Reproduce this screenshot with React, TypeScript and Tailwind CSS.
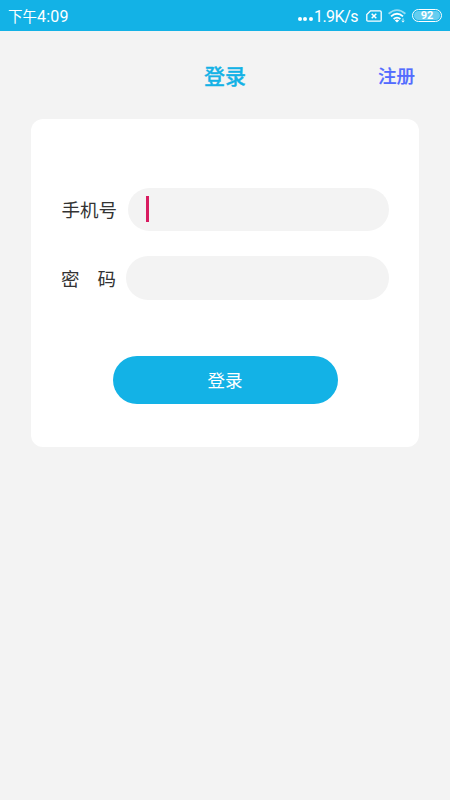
import { useState } from 'react';

const fontClass = "font-['Roboto','Noto_Sans_CJK_SC',sans-serif]";

function StatusBar() {
  return (
    <div className="flex h-[31px] items-center justify-between bg-[#13b2e6] pr-[8px] pl-[8px] text-white">
      <div className="flex items-center pt-[2px] leading-none">
        <span className="pt-[3px] text-[14.5px]">下午</span>
        <span className="text-[16px] tracking-[0.2px]">4:09</span>
      </div>
      <div className="flex items-center">
        <div className="mt-[7px] mr-px flex gap-[1.5px]">
          <i className="size-[4px] rounded-full bg-white" />
          <i className="size-[4px] rounded-full bg-white" />
          <i className="size-[4px] rounded-full bg-white" />
        </div>
        <span className="mt-[2px] text-[16px] leading-none tracking-[-0.5px]">1.9K/s</span>
        <svg className="ml-[8px]" width="16" height="12" viewBox="0 0 16 12" fill="none" stroke="white" strokeWidth="1.3">
          <path d="M4.5 .8H14Q15.2 .8 15.2 2V10Q15.2 11.2 14 11.2H2Q.8 11.2 .8 10V4.5Z" />
          <path d="M5.7 3.7L10.3 8.3M10.3 3.7L5.7 8.3" strokeWidth="1.5" />
        </svg>
        <svg className="mt-px ml-[6px]" width="18" height="14" viewBox="0 0 18 14" fill="none" stroke="white" strokeWidth="1.8">
          <path d="M.6 4.8Q9 -2.6 17.4 4.8" opacity=".55" />
          <path d="M3 7.4Q9 2.2 15 7.4" />
          <path d="M5.6 10Q9 7.2 12.4 10" />
          <path d="M6.8 11.4Q9 9.8 11.2 11.4L9 13.6Z" fill="white" stroke="none" />
          <path d="M15 9.400V13.200M13.600 11.700L15 13.100L16.400 11.700" strokeWidth="1" opacity=".8" />
        </svg>
        <div className="ml-[6px] h-[13px] w-[30px] rounded-full border border-white p-px">
          <div className="flex h-full items-center justify-center rounded-full bg-white/35 text-[11px] font-bold leading-none">92</div>
        </div>
      </div>
    </div>
  );
}

export default function App() {
  const [phone, setPhone] = useState('');
  const [password, setPassword] = useState('');

  return (
    <div className={`h-[800px] w-[450px] overflow-hidden bg-[#f3f3f3] ${fontClass}`}>
      <StatusBar />
      <header className="grid h-[88px] grid-cols-3 items-center px-[35px] pt-[5px] font-medium">
        <h1 className="col-start-2 text-center text-[21px] text-[#13b2e6] [-webkit-text-stroke:0.3px]">登录</h1>
        <a className="text-right text-[18.5px] text-[#526bff] [-webkit-text-stroke:0.2px]">注册</a>
      </header>
      <form className="mx-[31px] h-[328px] rounded-[12px] bg-white px-[30px] pt-[69px]">
        <div className="flex h-[43px] items-center justify-between">
          <label className="pt-[5px] pl-[0.5px] text-[18.5px] text-[#333]">手机号</label>
          <div className="flex h-[43px] w-[261px] items-center rounded-full bg-[#f3f3f3] pl-[18px]">
            <span className="mb-[2px] h-[26px] w-[2.5px] bg-[#d81b60]" />
            <input value={phone} onChange={(e) => setPhone(e.target.value)} className="w-[200px] outline-none" />
          </div>
        </div>
        <div className="mt-[25px] flex h-[44px] items-center justify-between">
          <label className="flex w-[55px] justify-between pt-[5px] text-[18.5px] text-[#333]">
            <span>密</span>
            <span>码</span>
          </label>
          <div className="h-[44px] w-[263px] rounded-full bg-[#f3f3f3] px-[18px]">
            <input type="password" value={password} onChange={(e) => setPassword(e.target.value)} className="h-full w-full outline-none" />
          </div>
        </div>
        <button type="button" className="mx-auto mt-[56px] block h-[48px] w-[225px] rounded-full bg-[#13b2e6] pt-[3px] text-[17.5px] text-white">
          登录
        </button>
      </form>
    </div>
  );
}
